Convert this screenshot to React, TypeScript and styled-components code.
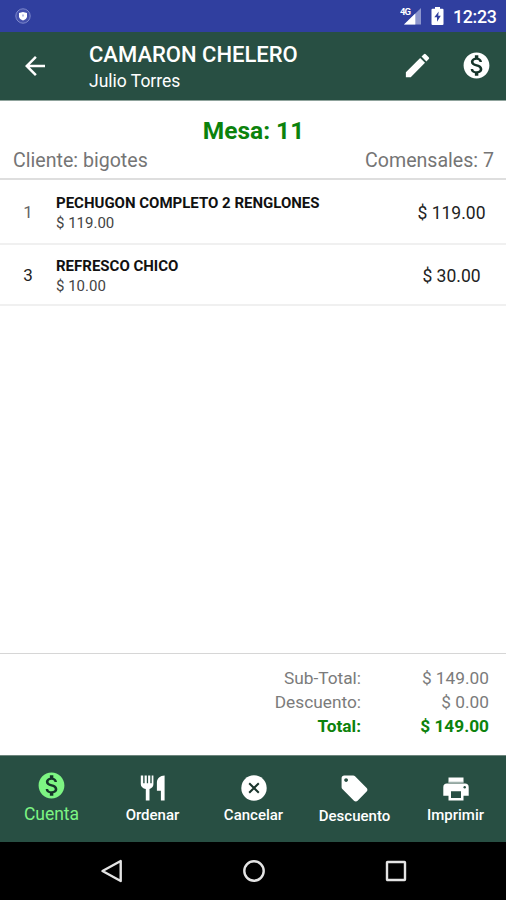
import React from "react";
import styled, { createGlobalStyle } from "styled-components";
import { MdArrowBack, MdEdit, MdMonetizationOn, MdLocalOffer } from "react-icons/md";

const GlobalStyle = createGlobalStyle`
  * { box-sizing: border-box; }
  body { margin: 0; background: #fff; font-family: Roboto, "Liberation Sans", sans-serif; }
  svg { display: block; flex: none; }
`;

const Screen = styled.div`
  width: 506px;
  height: 900px;
  display: flex;
  flex-direction: column;
  background: #fff;
  overflow: hidden;
`;

const StatusBar = styled.div`
  height: 32px;
  flex: none;
  background: #303f9f;
  display: flex;
  align-items: center;
  padding: 0 9px 0 15px;
  color: #fff;
`;

const StatusIcons = styled.div`
  margin-left: auto;
  display: flex;
  align-items: center;
  gap: 9px;
`;

const Clock = styled.span`
  font-size: 17.8px;
  font-weight: 500;
  line-height: 33px;
  width: 44px;
  white-space: nowrap;
  letter-spacing: -0.3px;
`;

const Header = styled.header`
  height: 69px;
  flex: none;
  background: #284f43;
  border-bottom: 1px solid #8fa39c;
  color: #fff;
  display: flex;
  align-items: flex-start;
  padding: 0 14px 0 20px;
`;

const HeaderIcon = styled.button<{ $gap?: number; $top?: number }>`
  border: 0;
  padding: 0;
  margin: ${(p) => p.$top ?? 18}px 0 0 ${(p) => p.$gap ?? 0}px;
  background: none;
  color: #fff;
`;

const Titles = styled.div`
  flex: 1;
  margin-left: 39px;
  padding-top: 9px;
  white-space: nowrap;
`;

const Title = styled.h1`
  margin: 0;
  font-size: 22px;
  font-weight: 500;
  line-height: 28px;
`;

const Subtitle = styled.div`
  font-size: 17.5px;
  line-height: 25px;
`;

const TableHead = styled.section`
  height: 79px;
  flex: none;
  padding: 15px 12px 0 13px;
  border-bottom: 2px solid #dedede;
`;

const TableName = styled.h2`
  margin: 0;
  text-align: center;
  color: #0c820c;
  font-size: 24.5px;
  font-weight: 700;
  line-height: 30px;
`;

const Guests = styled.div`
  display: flex;
  justify-content: space-between;
  color: #757575;
  font-size: 19.6px;
  line-height: 29px;
`;

const OrderList = styled.div`
  flex: 1;
`;

const OrderRow = styled.div<{ $height: number }>`
  height: ${(p) => p.$height}px;
  border-bottom: 2px solid #f0f0f0;
  display: flex;
  align-items: center;
  color: #222;
`;

const Quantity = styled.div<{ $muted?: boolean }>`
  width: 56px;
  text-align: center;
  font-size: 17px;
  padding-top: 1px;
  color: ${(p) => (p.$muted ? "#666" : "#222")};
`;

const Dish = styled.div`
  flex: 1;
  padding-top: 2px;
  white-space: nowrap;
`;

const DishName = styled.div`
  font-size: 15px;
  font-weight: 700;
  line-height: 20px;
  color: #111;
`;

const UnitPrice = styled.div`
  font-size: 15px;
  line-height: 20px;
  color: #444;
`;

const Amount = styled.div`
  width: 109px;
  text-align: center;
  font-size: 17.5px;
  padding-top: 2px;
`;

const Totals = styled.section`
  height: 102px;
  flex: none;
  border-top: 1px solid #d6d6d6;
  padding: 12px 17px 0 0;
`;

const TotalRow = styled.div<{ $strong?: boolean }>`
  display: grid;
  grid-template-columns: 1fr 128px;
  text-align: right;
  font-size: 17.3px;
  line-height: 24px;
  color: ${(p) => (p.$strong ? "#0c820c" : "#7b7b7b")};
  font-weight: ${(p) => (p.$strong ? 700 : 400)};
`;

const TabBar = styled.nav`
  height: 87px;
  flex: none;
  background: #284f43;
  border-top: 1px solid #6d857d;
  display: grid;
  grid-template-columns: repeat(5, 1fr);
  padding-left: 1px;
`;

const Tab = styled.button<{ $active?: boolean }>`
  border: 0;
  background: none;
  padding: ${(p) => (p.$active ? 14 : 17)}px 0 0;
  display: flex;
  flex-direction: column;
  align-items: center;
  justify-content: flex-start;
  color: ${(p) => (p.$active ? "#7df583" : "#fff")};
  font-family: inherit;
  font-size: ${(p) => (p.$active ? 17.5 : 15)}px;
  font-weight: ${(p) => (p.$active ? 400 : 500)};
  line-height: ${(p) => (p.$active ? 27 : 24)}px;
  white-space: nowrap;
`;

const CoinIcon = styled(MdMonetizationOn)`
  background: radial-gradient(circle, #15342a 12px, transparent 12.5px);
`;

const SystemNav = styled.div`
  height: 58px;
  flex: none;
  background: #000;
  display: flex;
  align-items: center;
  justify-content: center;
  gap: 118px;
  padding-left: 2px;
`;

const ShieldIcon = () => (
  <svg width="16" height="16" viewBox="0 0 16 16">
    <circle cx="8" cy="8" r="7.2" fill="#4450ab" stroke="#7d88cb" strokeWidth="1" />
    <path d="M4 5 8 4l4 1v3.4c0 1.9-1.8 3.2-4 4-2.2-.8-4-2.1-4-4z" fill="#fff" />
    <path d="M7.3 6.5h1.4v2H7.3z" fill="#9aa3dc" />
  </svg>
);

const SignalIcon = () => (
  <svg width="22" height="18" viewBox="0 0 22 18">
    <path d="M21 1v16.5H4z" fill="#8d96cd" />
    <path d="M15.3 6.5v11H4z" fill="#fff" />
    <path d="M0 0h11v9H0z" fill="#303f9f" />
    <text x="0" y="8" fill="#fff" fontFamily="Roboto, sans-serif" fontSize="9.5" fontWeight="700" textLength="11">4G</text>
  </svg>
);

const BatteryIcon = () => (
  <svg width="13" height="18" viewBox="0 0 12 18">
    <path d="M3.5 0h5v1.8H11a1 1 0 0 1 1 1V17a1 1 0 0 1-1 1H1a1 1 0 0 1-1-1V2.8a1 1 0 0 1 1-1h2.5z" fill="#fff" />
    <path d="M7.2 4.5 2.8 10.3h2.7v4.5l3.8-6.1H6.7z" fill="#303f9f" />
  </svg>
);

const CutleryIcon = () => (
  <svg width="30" height="30" viewBox="0 0 30 30" fill="currentColor">
    <path d="M2.8 2.5h2.4v7.8h1.4V2.5h2.2v7.8h1.3V2.5h2.2v7.8h1.4V2.5h1.7v8.8c0 2.5-1.7 4.1-3.9 4.8v11.4H7.8V16.1c-2.9-.6-5-2.3-5-4.8z" />
    <path d="M26.6 2.5v25h-3.7V17.8h-4V9.4c0-3.9 3.2-6.9 7.7-6.9z" />
  </svg>
);

const CancelIcon = () => (
  <svg width="30" height="30" viewBox="0 0 30 30">
    <circle cx="15" cy="15" r="12.7" fill="currentColor" />
    <path d="m10.2 10.2 9.6 9.6m0-9.6-9.6 9.6" stroke="#1a352c" strokeWidth="2" />
  </svg>
);

const PrinterIcon = () => (
  <svg width="30" height="30" viewBox="0 0 30 30">
    <path d="M7.5 4.5h15v5h-15z" fill="currentColor" />
    <path d="M7.5 9.2h15" stroke="#a9bab4" strokeWidth="1" />
    <path fillRule="evenodd" d="M6 10.5h18a3.7 3.7 0 0 1 3.7 3.7v8.5h-5.2v4.8h-15v-4.8H2.3v-8.5A3.7 3.7 0 0 1 6 10.5zm4 7.7V25h10v-6.8z" fill="currentColor" />
    <circle cx="23.7" cy="14.3" r="1.2" fill="#284f43" />
  </svg>
);

const orders = [
  { qty: 1, name: "PECHUGON COMPLETO 2 RENGLONES", unit: "$ 119.00", amount: "$ 119.00", height: 65, muted: true },
  { qty: 3, name: "REFRESCO CHICO", unit: "$ 10.00", amount: "$ 30.00", height: 61, muted: false },
];

export default function App() {
  return (
    <>
      <GlobalStyle />
      <Screen>
        <StatusBar>
          <ShieldIcon />
          <StatusIcons>
            <SignalIcon />
            <BatteryIcon />
            <Clock>12:23</Clock>
          </StatusIcons>
        </StatusBar>
        <Header>
          <HeaderIcon aria-label="Volver" $top={19}><MdArrowBack size={30} /></HeaderIcon>
          <Titles>
            <Title>CAMARON CHELERO</Title>
            <Subtitle>Julio Torres</Subtitle>
          </Titles>
          <HeaderIcon aria-label="Editar"><MdEdit size={31} /></HeaderIcon>
          <HeaderIcon aria-label="Cobrar" $gap={28}><CoinIcon size={31} /></HeaderIcon>
        </Header>
        <TableHead>
          <TableName>Mesa: 11</TableName>
          <Guests>
            <span>Cliente: bigotes</span>
            <span>Comensales: 7</span>
          </Guests>
        </TableHead>
        <OrderList>
          {orders.map((o) => (
            <OrderRow key={o.name} $height={o.height}>
              <Quantity $muted={o.muted}>{o.qty}</Quantity>
              <Dish>
                <DishName>{o.name}</DishName>
                <UnitPrice>{o.unit}</UnitPrice>
              </Dish>
              <Amount>{o.amount}</Amount>
            </OrderRow>
          ))}
        </OrderList>
        <Totals>
          <TotalRow><span>Sub-Total:</span><span>$ 149.00</span></TotalRow>
          <TotalRow><span>Descuento:</span><span>$ 0.00</span></TotalRow>
          <TotalRow $strong><span>Total:</span><span>$ 149.00</span></TotalRow>
        </Totals>
        <TabBar>
          <Tab $active><CoinIcon size={31} />Cuenta</Tab>
          <Tab><CutleryIcon />Ordenar</Tab>
          <Tab><CancelIcon />Cancelar</Tab>
          <Tab><MdLocalOffer size={31} />Descuento</Tab>
          <Tab><PrinterIcon />Imprimir</Tab>
        </TabBar>
        <SystemNav>
          <svg width="24" height="24" viewBox="0 0 24 24">
            <path d="M20.7 2v20L2.5 12z" fill="none" stroke="#e4e4e4" strokeWidth="2.4" strokeLinejoin="round" />
          </svg>
          <svg width="24" height="24" viewBox="0 0 24 24">
            <circle cx="12" cy="12" r="9.7" fill="none" stroke="#e4e4e4" strokeWidth="2.4" />
          </svg>
          <svg width="24" height="24" viewBox="0 0 24 24">
            <rect x="3" y="3" width="18" height="18" rx="0.5" fill="none" stroke="#e4e4e4" strokeWidth="2.4" />
          </svg>
        </SystemNav>
      </Screen>
    </>
  );
}
